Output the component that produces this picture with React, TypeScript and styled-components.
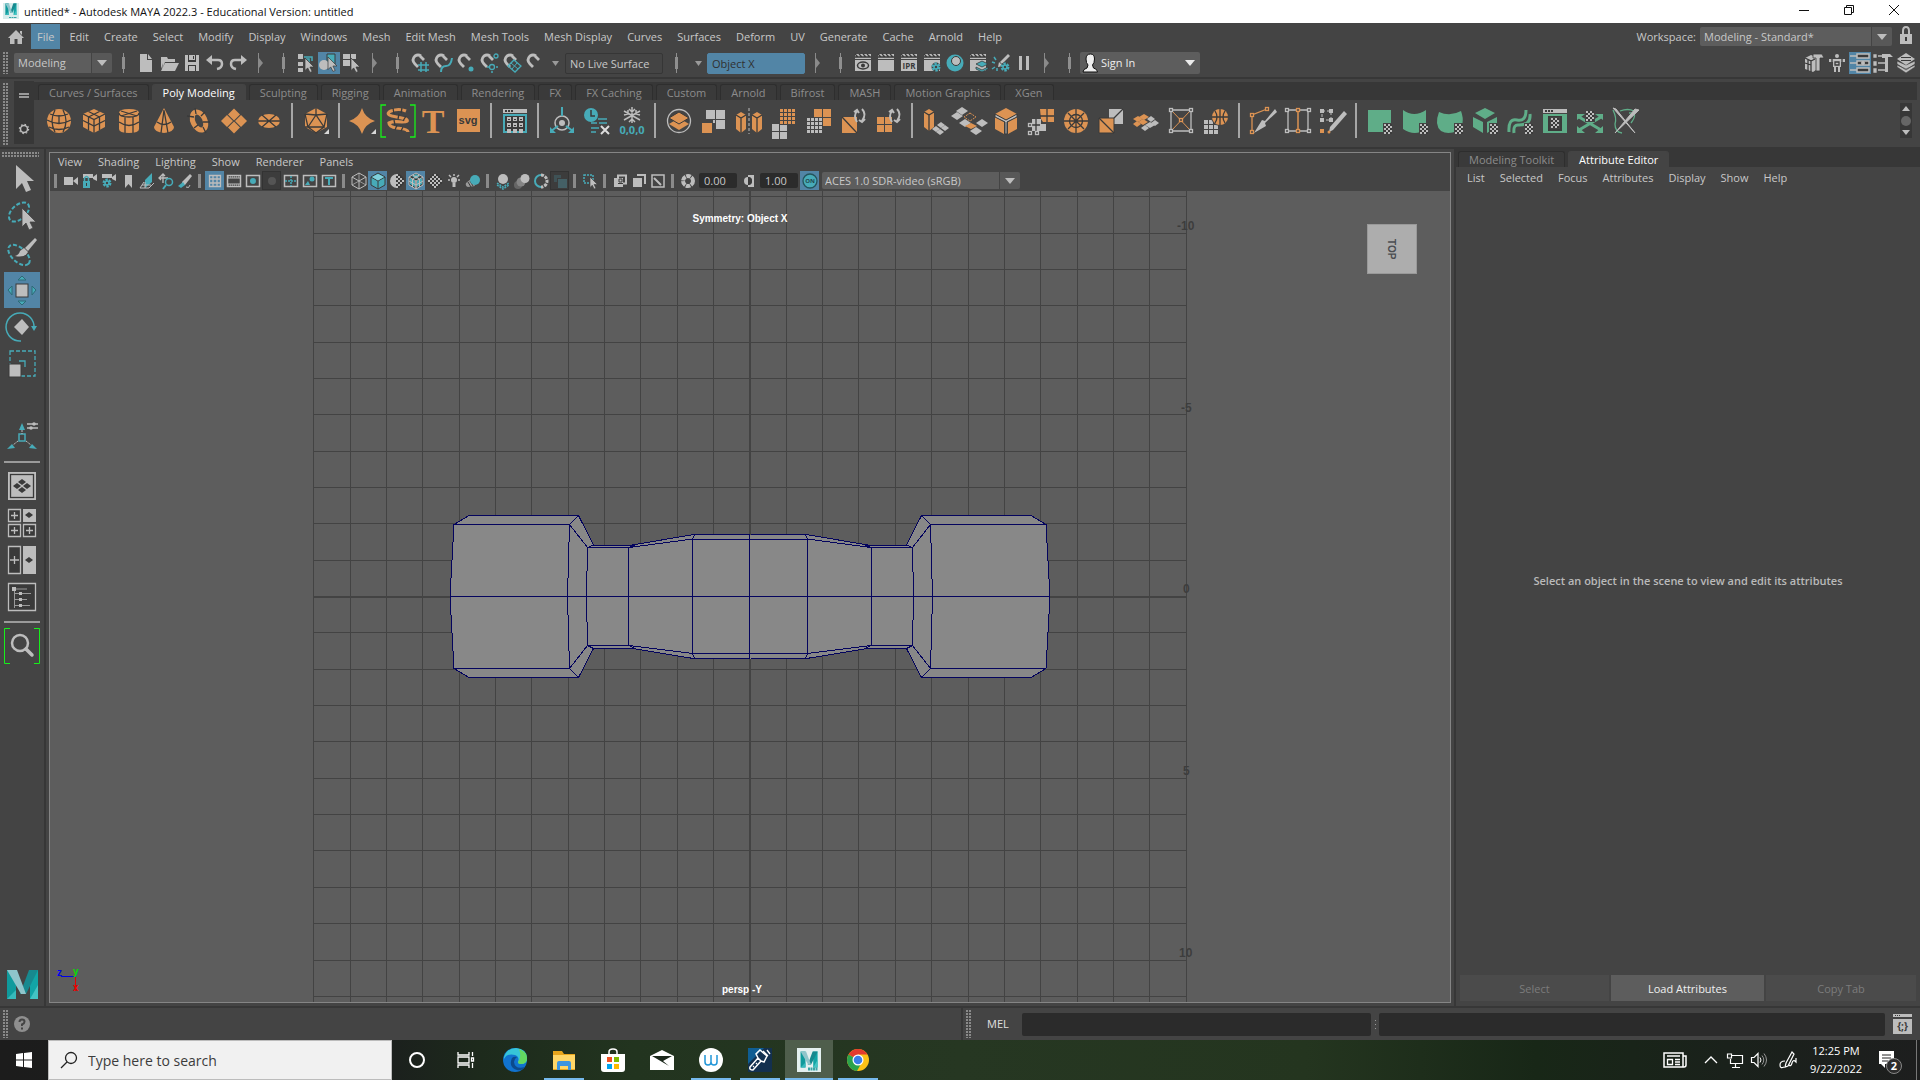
import React from "react";
import styled, { createGlobalStyle, css } from "styled-components";

const C = {
  bg: "#444444",
  dark: "#373737",
  well: "#2b2b2b",
  raised: "#5d5d5d",
  accent: "#5285a6",
  text: "#c8c8c8",
  dim: "#8c8c8c",
  light: "#bdbdbd",
  teal: "#47abb8",
  orange: "#dc9353",
  green: "#5fad88",
  ink: "#3a3a3a",
  lime: "#17f01a",
};
const { light: L, teal: T, orange: O, green: G, ink: K } = C;

const Global = createGlobalStyle`
  * { box-sizing: border-box; }
  body { margin: 0; background: ${C.bg}; }
  button, input, select { font: inherit; color: inherit; margin: 0; }
`;

const sans = `"Open Sans", "Noto Sans", sans-serif`;

const Shell = styled.div`
  display: flex;
  flex-direction: column;
  height: 100vh;
  background: ${C.bg};
  color: ${C.text};
  font: 11px/16px ${sans};
  white-space: nowrap;
  overflow: hidden;
`;

const Svg = styled.svg<{ $w?: number; $h?: number }>`
  display: block;
  flex: none;
  width: ${(p) => p.$w ?? 20}px;
  height: ${(p) => p.$h ?? p.$w ?? 20}px;
  overflow: visible;
`;

const bare = css`
  border: 0;
  padding: 0;
  background: none;
  color: inherit;
  display: flex;
  align-items: center;
  justify-content: center;
  flex: none;
`;

const Spacer = styled.div`
  flex: 1;
`;

const Grip = styled.div<{ $wide?: boolean }>`
  flex: none;
  width: ${(p) => (p.$wide ? "37px" : "5px")};
  height: ${(p) => (p.$wide ? "5px" : "auto")};
  margin: ${(p) => (p.$wide ? "0 2px" : "2px 6px 2px 3px")};
  align-self: stretch;
  background-image: radial-gradient(circle at 1px 1px, #8a8a8a 1px, transparent 1px);
  background-size: 3px 3px;
`;

/* ---------- title bar ---------- */
const TitleBar = styled.header`
  display: flex;
  align-items: center;
  flex: none;
  height: 23px;
  padding: 0 4px 3px 3px;
  background: #fff;
  color: #111;
`;
const TitleText = styled.h1`
  margin: 0 0 0 5px;
  font: inherit;
  padding-top: 3px;
`;
const WinButton = styled.button`
  ${bare}
  width: 45px;
  height: 20px;
  color: #111;
`;

/* ---------- menus ---------- */
const MenuBar = styled.nav`
  display: flex;
  flex: none;
  height: 27px;
  padding: 1px 0;
  align-items: stretch;
`;
const HomeButton = styled.button`
  ${bare}
  width: 31px;
`;
const MenuItem = styled.button<{ $on?: boolean }>`
  ${bare}
  padding: ${(p) => (p.$on ? "0 6px" : "0 7px 0 8px")};
  ${(p) => p.$on && `background: ${C.accent}; margin-right: 1px;`}
`;
const WorkspaceLabel = styled.label`
  display: flex;
  align-items: center;
  gap: 4px;
`;

const PickWrap = styled.span<{ $w: number; $h: number; $cut?: boolean }>`
  position: relative;
  display: flex;
  align-items: center;
  flex: none;
  width: ${(p) => p.$w}px;
  height: ${(p) => p.$h}px;
  background: ${(p) =>
    p.$cut === false
      ? C.raised
      : `linear-gradient(90deg, ${C.raised} calc(100% - 21px), ${C.bg} calc(100% - 21px), ${C.bg} calc(100% - 20px), #585858 calc(100% - 20px))`};
  border-radius: 2px;
`;
const PickSelect = styled.select<{ $pad?: number }>`
  appearance: none;
  border: 0;
  background: none;
  width: 100%;
  height: 100%;
  padding: 0 20px 0 ${(p) => p.$pad ?? 4}px;
  outline: 0;
`;
const PickArrow = styled.span<{ $c?: string }>`
  position: absolute;
  right: 5px;
  width: 0;
  height: 0;
  border: 5px solid transparent;
  border-top: 6px solid ${(p) => p.$c ?? L};
  border-bottom: 0;
  pointer-events: none;
`;

function Pick(p: { id: string; value: string; w: number; h: number; label?: string; cut?: boolean; pad?: number; arrow?: string }) {
  return (
    <PickWrap $w={p.w} $h={p.h} $cut={p.cut}>
      <PickSelect id={p.id} aria-label={p.label} $pad={p.pad}>
        <option>{p.value}</option>
      </PickSelect>
      <PickArrow $c={p.arrow} />
    </PickWrap>
  );
}

/* ---------- status line ---------- */
const StatusLine = styled.div`
  display: flex;
  align-items: center;
  flex: none;
  height: 27px;
  padding: 0 3px 1px 0;
`;
const Tool = styled.button<{ $on?: boolean; $w?: number }>`
  ${bare}
  width: ${(p) => p.$w ?? 23}px;
  height: 22px;
  ${(p) => p.$on && `background: linear-gradient(${C.accent}, ${C.accent}) center / 22px 100% no-repeat;`}
`;
const SepCell = styled.span<{ $w?: number }>`
  display: flex;
  justify-content: center;
  flex: none;
  width: ${(p) => p.$w ?? 22}px;
`;
const Bar = ({ w }: { w?: number }) => (
  <SepCell $w={w}>
    <Svg $w={5} $h={20} viewBox="0 0 5 20">
      <path d="M2 0h1v20H2zM1 4h3v12H1z" fill="#8f8f8f" />
    </Svg>
  </SepCell>
);
const Fold = ({ w }: { w?: number }) => (
  <SepCell $w={w}>
    <Svg $w={5} $h={20} viewBox="0 0 5 20">
      <path d="M0 0h1v20H0zM1 5l4 5-4 5z" fill="#8a8a8a" />
    </Svg>
  </SepCell>
);
const Down = ({ w }: { w: number }) => (
  <Tool $w={w} aria-label="More options">
    <Svg $w={7} $h={5} viewBox="0 0 7 5">
      <path d="M0 0h7L3.500 5z" fill="#9a9a9a" />
    </Svg>
  </Tool>
);
const Field = styled.input<{ $w: number; $tone?: string }>`
  flex: none;
  width: ${(p) => p.$w}px;
  height: 21px;
  padding: 0 4px;
  border-radius: 2px;
  border: 1px solid ${(p) => (p.$tone ? p.$tone : "#363636")};
  background: ${(p) => p.$tone ?? C.bg};
  color: ${(p) => (p.$tone ? "#303030" : C.text)};
  outline: 0;
`;
const SignIn = styled.div`
  display: flex;
  align-items: center;
  position: relative;
  color: #eee;
`;
const SignInFace = styled.span`
  position: absolute;
  left: 3px;
  z-index: 1;
  pointer-events: none;
`;

const Rule = styled.div`
  flex: none;
  height: 2px;
  background: ${C.dark};
`;

/* ---------- shelf ---------- */
const Shelf = styled.section`
  display: flex;
  flex: none;
  height: 68px;
  padding: 2px 3px 0 0;
`;
const ShelfSide = styled.div`
  display: flex;
  flex-direction: column;
  align-items: center;
  justify-content: space-between;
  flex: none;
  width: 20px;
  height: 63px;
  padding: 12px 0 10px;
  background: ${C.dark};
`;
const ShelfMain = styled.div`
  flex: 1;
  display: flex;
  flex-direction: column;
  padding-top: 1px;
`;
const TabRow = styled.div<{ $inset?: number }>`
  display: flex;
  align-items: flex-end;
  gap: 3px;
  flex: none;
  height: 18px;
  padding-left: ${(p) => p.$inset ?? 2}px;
  background: ${C.dark};
`;
const Tab = styled.button<{ $on?: boolean }>`
  ${bare}
  height: 16px;
  padding: 0 10px;
  border-radius: 3px 3px 0 0;
  border: 1px solid ${(p) => (p.$on ? C.bg : "#2e2e2e")};
  border-bottom: 0;
  background: ${(p) => (p.$on ? C.bg : "#3a3a3a")};
  color: ${(p) => (p.$on ? "#ffffff" : C.dim)};
`;
const ShelfRow = styled.div`
  display: flex;
  align-items: center;
  flex: 1;
  padding: 0 5px 6px 7px;
`;
const ShelfButton = styled.button`
  ${bare}
  width: 35px;
  height: 35px;
`;
const ShelfSep = styled.span`
  flex: none;
  width: 2px;
  height: 35px;
  margin: 0 5px;
  background: #a6a6a6;
`;
const Scroller = styled.div`
  display: flex;
  flex-direction: column;
  align-items: center;
  justify-content: space-between;
  width: 12px;
  height: 35px;
  padding: 3px 0;
  background: ${C.dark};
`;

/* ---------- workspace ---------- */
const Work = styled.main`
  display: flex;
  flex: 1;
  min-height: 0;
`;
const ToolBox = styled.aside`
  display: flex;
  flex-direction: column;
  align-items: center;
  flex: none;
  width: 44px;
  padding: 3px 0 6px;
`;
const ToolCell = styled.button<{ $on?: boolean; $first?: boolean }>`
  ${bare}
  width: 36px;
  height: 36px;
  margin-bottom: 1px;
  ${(p) => p.$first && "margin-top: 4px;"}
  ${(p) => p.$on && `background: ${C.accent};`}
`;
const ToolGap = styled.div`
  flex: none;
  height: 36px;
`;
const ToolSep = styled.hr`
  flex: none;
  width: 36px;
  height: 2px;
  margin: 5px 0;
  border: 0;
  background: #9a9a9a;
`;
const VRule = styled.div`
  flex: none;
  width: 2px;
  background: ${C.dark};
`;
const Viewport = styled.section`
  flex: 1;
  display: flex;
  flex-direction: column;
  min-width: 0;
  margin: 3px;
  border: 1px solid #858585;
`;
const PanelMenu = styled.nav<{ $roomy?: boolean }>`
  display: flex;
  align-items: center;
  flex: none;
  gap: ${(p) => (p.$roomy ? 15 : 16)}px;
  height: ${(p) => (p.$roomy ? 22 : 18)}px;
  padding-left: ${(p) => (p.$roomy ? 11 : 8)}px;
`;
const PlainMenu = styled.button`
  ${bare}
`;
const PanelTools = styled.div`
  display: flex;
  align-items: center;
  flex: none;
  height: 20px;
  padding-bottom: 1px;
`;
const MiniTool = styled.button<{ $on?: boolean; $box?: boolean }>`
  ${bare}
  width: 19px;
  height: 19px;
  ${(p) => p.$on && `background: ${C.accent};`}
  ${(p) => p.$box && `background: #3c3c3c; border: 1px solid #333;`}
`;
const MiniSep = styled.span`
  flex: none;
  width: 3px;
  height: 14px;
  margin: 0 4px;
  background: #8a8a8a;
`;
const NumField = styled.input`
  flex: none;
  width: 38px;
  height: 15px;
  margin: 0 2px;
  padding: 0 5px;
  border: 0;
  border-radius: 2px;
  background: ${C.well};
`;
const Canvas = styled.div`
  position: relative;
  flex: 1;
  min-height: 0;
  overflow: hidden;
  background: ${C.raised};
  font: bold 10px/12px "Liberation Sans", Arial, sans-serif;
`;
const Scene = styled.svg`
  position: absolute;
  inset: 0;
  width: 100%;
  height: 100%;
`;
const Caption = styled.span<{ $bottom?: boolean }>`
  position: absolute;
  left: 0;
  right: ${(p) => (p.$bottom ? 16 : 20)}px;
  ${(p) => (p.$bottom ? "bottom: 6px;" : "top: 22px;")}
  text-align: center;
  color: #fff;
`;
const ViewCube = styled.button`
  position: absolute;
  top: 33px;
  right: 33px;
  width: 50px;
  height: 50px;
  padding: 0 2px 0 0;
  border: 1px solid #999;
  background: #adadad;
  color: #4b4e52;
  font-weight: bold;
  writing-mode: vertical-rl;
`;
const Gizmo = styled.svg`
  position: absolute;
  left: 6px;
  bottom: 6px;
  width: 24px;
  height: 30px;
`;

/* ---------- attribute editor ---------- */
const Attributes = styled.aside`
  display: flex;
  flex-direction: column;
  flex: none;
  width: 464px;
`;
const Message = styled.p`
  flex: 1;
  display: flex;
  align-items: center;
  justify-content: center;
  margin: 0;
  padding-bottom: 3px;
  font-weight: 600;
  color: #bababa;
`;
const ButtonRow = styled.div`
  display: grid;
  grid-template-columns: 149fr 153fr 150fr;
  gap: 2px;
  padding: 0 4px 5px;
`;
const WideButton = styled.button`
  height: 26px;
  padding: 1px 0 0;
  border: 0;
  background: ${C.raised};
  color: #f0f0f0;
  &:disabled {
    background: #4b4b4b;
    color: #7c7c7c;
  }
`;

/* ---------- command line ---------- */
const CommandRow = styled.div`
  display: flex;
  flex: none;
  height: 32px;
`;
const HelpLine = styled.div`
  display: flex;
  align-items: center;
  flex: 961 1 0;
`;
const CommandLine = styled.div`
  display: flex;
  align-items: center;
  flex: 957 1 0;
`;
const MelLabel = styled.label`
  margin: 0 13px 0 10px;
  color: #e0e0e0;
`;
const Entry = styled.input<{ $grow: number }>`
  flex: ${(p) => p.$grow} 1 0;
  min-width: 0;
  height: 23px;
  border: 0;
  border-radius: 2px;
  background: ${C.well};
  outline: 0;
`;
const EntryGrip = styled.span`
  flex: none;
  width: 1px;
  height: 9px;
  margin: 0 3px 0 4px;
  background: repeating-linear-gradient(#999 0 1px, transparent 1px 4px);
`;
const ScriptButton = styled.button`
  ${bare}
  width: 35px;
`;

/* ---------- windows taskbar ---------- */
const Taskbar = styled.footer`
  display: flex;
  align-items: stretch;
  flex: none;
  height: 40px;
  background: linear-gradient(90deg, #1c1c1c 0, #1b1f1d 20%, #1d2a1c 25%, #22341f 33%, #263722 50%, #24351f 68%, #182717 80%, #1a211b 90%, #1d1e1e 100%);
  color: #fff;
`;
const StartButton = styled.button`
  ${bare}
  width: 48px;
`;
const SearchBox = styled.label`
  display: flex;
  align-items: center;
  flex: none;
  width: 344px;
  padding-left: 12px;
  gap: 11px;
  background: #f1f1f1;
  border: 1px solid #bcbcbc;
`;
const SearchInput = styled.input`
  flex: 1;
  min-width: 0;
  border: 0;
  padding: 1px 0 0;
  background: none;
  outline: 0;
  font-size: 14px;
  line-height: 20px;
  &::placeholder {
    color: #3c3c3c;
    opacity: 1;
  }
`;
const TaskButton = styled.button<{ $open?: boolean; $active?: boolean }>`
  ${bare}
  width: 49px;
  background:
    ${(p) =>
      p.$active
        ? "linear-gradient(#76b9ed, #76b9ed) center bottom / 48px 2px no-repeat, linear-gradient(#4f5e4c, #4f5e4c) center / 48px 100% no-repeat"
        : p.$open
          ? "linear-gradient(#76b9ed, #76b9ed) center bottom / 40px 2px no-repeat"
          : "none"};
`;
const TrayButton = styled.button<{ $w: number }>`
  ${bare}
  width: ${(p) => p.$w}px;
`;
const Clock = styled.time`
  display: flex;
  flex-direction: column;
  justify-content: center;
  gap: 2px;
  width: 64px;
  text-align: center;
`;
const Desk = styled.span`
  width: 1px;
  margin: 0 3px 0 7px;
  background: #777;
`;

/* ---------- drawings ---------- */
const k = { stroke: K, strokeWidth: 1.3, fill: "none" };

const Checker = ({ x, y, s = 2 }: { x: number; y: number; s?: number }) => (
  <g>
    <rect x={x - 1} y={y - 1} width={s * 4 + 2} height={s * 5 + 2} fill={C.bg} />
    {Array.from({ length: 20 }, (_, i) => {
      const cx = i % 4;
      const cy = Math.floor(i / 4);
      return <rect key={i} x={x + cx * s} y={y + cy * s} width={s} height={s} fill={(cx + cy) % 2 ? K : L} />;
    })}
  </g>
);

/* a ball covered with two-pixel checks */
const CheckBall = ({ from = 0 }: { from?: number }) => (
  <g>
    {Array.from({ length: 49 }, (_, i) => {
      const cx = i % 7;
      const cy = Math.floor(i / 7);
      const inside = Math.hypot(cx - 3, cy - 3) < 3.5 && cx >= from;
      return inside ? <rect key={i} x={1 + cx * 2} y={1 + cy * 2} width="2" height="2" fill={(cx + cy) % 2 ? L : K} /> : null;
    })}
  </g>
);

const Squares = ({ x, y, n, s, g, c }: { x: number; y: number; n: number; s: number; g: number; c: string }) => (
  <g fill={c}>
    {Array.from({ length: n * n }, (_, i) => (
      <rect key={i} x={x + (i % n) * (s + g)} y={y + Math.floor(i / n) * (s + g)} width={s} height={s} />
    ))}
  </g>
);

const CubeLines = ({ fill }: { fill: string }) => (
  <>
    <path d="M13 1 24 6v13L13 25 2 19V6z" fill={fill} />
    <path d="M2 6l11 5.500L24 6M13 11.500V25" {...k} />
  </>
);

const Spin = () => <path d="M16 3q-4 5 0 11m-3-10 3-2 2 3M21 1q5 5 0 12m-3-1 3 2 3-3" stroke={L} strokeWidth="2" fill="none" />;
const Corner = () => <path d="M26 21v5h-5z" fill="#d8d8d8" />;
const node = (x: number, y: number, c = L) => <rect key={`${x},${y}`} x={x - 1.5} y={y - 1.5} width="3" height="3" fill={C.bg} stroke={c} strokeWidth="1.300" />;
const Diamond = ({ x, y, c, w = 6, h = 4 }: { x: number; y: number; c: string; w?: number; h?: number }) => (
  <path d={`M${x} ${y - h}l${w} ${h}-${w} ${h}-${w}-${h}z`} fill={c} />
);

const shelf: (null | [string, React.ReactNode])[] = [
  ["Sphere", <><circle cx="13" cy="13" r="12" fill={O} /><path d="M1 12q12 7 24 0M3 19q10 5 20 0M4 6q9 4 18 0M9 2Q3 13 9 24M17 2q6 11 0 22M13 7v9" {...k} /></>],
  ["Cube", <><CubeLines fill={O} /><path d="M2 12.500 13 18l11-5.500M7.500 8.500V22M18.500 8.500V22M7.500 3.500l11 5.500M18.500 3.500l-11 5.500" {...k} /></>],
  ["Cylinder", <><path d="M3 5q0-4 10-4t10 4v16q0 4-10 4T3 21z" fill={O} /><path d="M3 5q0 4 10 4t10-4M3 14q10 7 20 0M9 9v16M17 9v16M5 3l16 5M21 3 5 8" {...k} /></>],
  ["Cone", <><path d="M13 0 23 19q0 5-10 6-10-1-10-6z" fill={O} /><path d="M13 2 10 25M13 2l4 23M6 14q7 5 14 0" {...k} /></>],
  ["Torus", <><ellipse cx="13" cy="13" rx="6" ry="9.500" transform="rotate(-25 13 13)" fill="none" stroke={O} strokeWidth="5" /><path d="M1 8l7 1M9 0l1 6M19 4l-4 4M24 14l-7 0M20 25l-3-6M8 20l4-3" {...k} /></>],
  ["Plane", <><Diamond x={13} y={6.5} c={O} h={6} /><Diamond x={6} y={13} c={O} h={6} /><Diamond x={20} y={13} c={O} h={6} /><Diamond x={13} y={19.5} c={O} h={6} /></>],
  ["Disc", <><ellipse cx="13" cy="13" rx="11" ry="7" fill={O} /><path d="M2 13h22M6 7l14 12M20 7 6 19" {...k} /></>],
  null,
  ["Platonic solid", <><path d="M13 0l11 6v13l-11 6-11-6V6z" fill={O} /><path d="M13 0v7M13 7 5 19h16zM13 7 2 6M13 7l11-1M2 6l3 13-3 0M24 6l-3 13M5 19l8 6 8-6" {...k} /><Corner /></>],
  null,
  ["Super shape", <><path d="M12 0q3 10 13 13-10 3-13 13Q9 16-1 13 9 10 12 0z" fill={O} /><Corner /></>],
  ["Helix", <><path d="M1-3h-5v32h5M25-3h5v32h-5" stroke={C.lime} fill="none" strokeWidth="1.300" /><path d="M21 3Q14 0 6 3q-6 3 1 5 10 2 14 3 4 3-4 3-9-1-13 1 0 4 8 5 11 1 11 4" stroke={O} strokeWidth="3.200" fill="none" /><path d="M8 0l1 6M14 6l-1 5M21 8l-3 5M9 12l1 5M12 17l-2 5M17 0l-1 5M18 19l-2 4" {...k} /></>],
  ["Type", <text x="13" y="25" textAnchor="middle" fill={O} fontFamily="Liberation Serif, serif" fontWeight="bold" fontSize="34">T</text>],
  ["SVG", <><rect x="2" y="1" width="23" height="23" fill={O} /><text x="13" y="16" textAnchor="middle" fill={K} fontFamily="Liberation Sans, sans-serif" fontWeight="bold" fontSize="11">svg</text></>],
  null,
  ["Content browser", <><path d="M1 1h24v4H1z" fill={L} /><path d="M3 2h2v2H3zM6 2h2v2H6zM9 2h2v2H9z" fill={K} /><path d="M1 6h24v19H1z" fill={T} /><rect x="3" y="8" width="20" height="15" fill={K} /><Squares x={5} y={9} n={3} s={4} g={2} c={L} /><path d="M6 11h2v1H6zM12 11h2v1h-2zM18 11h2v1h-2zM6 17h2v1H6zM12 17h2v1h-2zM18 17h2v1h-2z" fill={K} /></>],
  null,
  ["Center pivot", <><circle cx="13" cy="15" r="7" fill="none" stroke={L} strokeWidth="1.500" /><circle cx="13" cy="15" r="3" fill={L} /><path d="M13-1v9M9 18l-7 5M17 18l7 5" stroke={T} strokeWidth="2" /><path d="M1 19v6h6zM25 19v6h-6z" fill={T} /></>],
  ["Delete history", <><circle cx="7" cy="7" r="7" fill={T} /><path d="M7 2v6h4" stroke={K} fill="none" strokeWidth="1.500" /><path d="M14 11h9M7 15h6M15 15h8M7 20h8M7 24h5" stroke={T} strokeWidth="1.500" /><path d="M17 18l8 8M25 18l-8 8" stroke="#ddd" strokeWidth="2" /></>],
  ["Freeze transforms", <><path d="M13-1v16M5 3l16 9M21 3 5 12M10 1l3 3 3-3M10 14l3-3 3 3M5 7l4-1V2M21 7l-4-1V2" stroke={L} strokeWidth="1.500" fill="none" /><text x="13" y="26" textAnchor="middle" fill={T} fontFamily="Open Sans, sans-serif" fontWeight="bold" fontSize="11">0,0,0</text></>],
  null,
  ["Combine", <><circle cx="13" cy="13" r="11.500" fill="none" stroke={L} strokeWidth="1.300" /><Diamond x={13} y={16} c={O} w={10} h={6} /><path d="M3 10l10-6 10 6-10 6z" fill={O} stroke={K} /></>],
  ["Separate", <><path d="M5 2h9v9H5zM15 2h9v9h-9zM15 12h9v9h-9zM12 12h2v3h-2z" fill={L} /><rect x="1" y="15" width="10" height="10" fill={O} /></>],
  ["Mirror", <><path d="M0 7l5-3 5 3v14l-5 4-5-4zM16 7l5-3 5 3v14l-5 4-5-4z" fill={O} /><path d="M0 7l5 3 5-3M5 10v15M16 7l5 3 5-3M21 10v15" {...k} /><path d="M13 0v26" stroke={L} strokeDasharray="3 2" /></>],
  ["Smooth", <><Squares x={1} y={16} n={2} s={7} g={1} c={L} /><rect x="8" y="0" width="18" height="17" fill={C.bg} /><path d="M9 17h7v6H9z" fill={L} /><Squares x={9} y={1} n={4} s={3} g={1} c={O} /></>],
  ["Reduce", <><Squares x={8} y={1} n={2} s={8} g={1} c={O} /><rect x="0" y="9" width="16" height="17" fill={C.bg} /><Squares x={1} y={10} n={4} s={3} g={1} c={L} /></>],
  ["Triangulate", <><path d="M1 9h15v16H1z" fill={O} /><path d="M1 9l15 16" {...k} /><Spin /></>],
  ["Quadrangulate", <><Squares x={1} y={9} n={2} s={7} g={1} c={O} /><Spin /></>],
  null,
  ["Extrude", <><path d="M1 4l5-3 5 3v15l-5 4-5-4z" fill={O} /><path d="M1 4l5 3 5-3M6 7v16" {...k} /><Diamond x={18} y={17} c={L} w={4} h={3} /><Diamond x={13} y={21} c={L} w={4} h={3} /><Diamond x={22} y={20} c={L} w={4} h={3} /><Diamond x={17} y={24} c={L} w={4} h={3} /></>],
  ["Bridge", <><Diamond x={4} y={3} c={L} /><Diamond x={-1} y={8} c={L} /><Diamond x={24} y={15} c={L} /><Diamond x={7} y={15} c={L} /><Diamond x={18} y={23} c={L} /><Diamond x={13} y={18} c={O} h={3} /><path d="M12 5l6 4-6 4-6-4z" stroke={O} fill="none" strokeDasharray="2 1" /></>],
  ["Bevel", <><path d="M13 0l11 6-11 6L2 6z" fill={O} /><path d="M2 9l9 5v12l-9-5zM24 9l-9 5v12l9-5z" fill={O} /><path d="M2 6l11 6 11-6v3l-10 5v12h-2V14L2 9z" fill={L} stroke={K} /></>],
  ["Collapse", <><path d="M12 1h14v13H15l-2-3z" fill={O} /><path d="M19 1v13M12 8h14" {...k} /><path d="M4 11h9v12H4z" fill={L} /><path d="M8 11v12M4 17h13" {...k} /><path d="M12 16h6v7h-6z" fill={L} />{node(2, 17)}{node(2, 25)}{node(9, 25)}</>],
  ["Circularize", <><circle cx="13" cy="13" r="12" fill={O} /><circle cx="13" cy="13" r="6.500" {...k} /><path d="M13 1v24M1 13h24M5 5l16 16M21 5 5 21" {...k} /></>],
  ["Merge", <><path d="M11 1h14v15H11z" fill={L} /><path d="M1 10h15v15H1z" fill={O} stroke={K} /><path d="M25 1 16 10M1 10l15 15" {...k} /></>],
  ["Merge to center", <><Diamond x={5} y={11} c={O} w={5} h={3} /><Diamond x={11} y={9} c={O} w={5} h={3} /><Diamond x={4} y={16} c={O} w={4} h={3} /><Diamond x={10} y={14} c={O} w={5} h={3} /><Diamond x={18} y={11} c={L} w={4} h={3} /><Diamond x={22} y={15} c={L} w={4} h={3} /><Diamond x={17} y={17} c={L} w={5} h={3} /><Diamond x={12} y={20} c={L} w={4} h={3} /></>],
  ["Target weld", <><path d="M3 2h20v21H3z" stroke={L} fill="none" strokeWidth="1.300" /><path d="M4 3l18 19M22 3 4 22" stroke={O} />{node(3, 2)}{node(23, 2)}{node(3, 23)}{node(23, 23)}{node(13, 12, O)}</>],
  ["Transfer", <><Squares x={1} y={12} n={3} s={4} g={1} c={L} /><circle cx="17" cy="9" r="9" fill={C.bg} /><circle cx="17" cy="9" r="8" fill={O} /><path d="M17 1v16M9 9h16M12 3q4 6 0 12M22 3q-4 6 0 12" {...k} /></>],
  null,
  ["Multi-cut", <><path d="M2 24V7L17 1" stroke={O} fill="none" strokeWidth="1.300" /><path d="M25 1 15 13l-3-1-8 13 12-7-1-3L27 4z" fill={L} />{node(2, 7, O)}{node(17, 1, O)}{node(2, 24, O)}</>],
  ["Insert edge loop", <><path d="M3 2h20M3 23h20M3 2v21M23 2v21" stroke={L} strokeWidth="1.300" /><path d="M13 2v21" stroke={O} strokeWidth="1.500" />{node(2, 2)}{node(24, 2)}{node(2, 23)}{node(24, 23)}{node(13, 2, O)}{node(13, 23, O)}</>],
  ["Quad draw", <><path d="M2 3h9v9H2z" stroke={L} fill="none" strokeDasharray="3 2" /><path d="M0 1h4v4H0zM9 1h4v4H9zM0 10h4v4H0zM9 10h4v4H9z" fill={L} /><path d="M0 21h4v4H0z" fill={O} /><path d="M24 3l3 3-14 16-4 2 1-5z" fill={L} /><circle cx="9" cy="24" r="1.500" fill={O} /></>],
  null,
  ["Planar map", <><rect x="1" y="2" width="23" height="22" fill={G} /><Checker x={17} y={16} /></>],
  ["Cylindrical map", <><path d="M1 2q11 8 23 0v19q-11 8-23 0z" fill={G} /><Checker x={18} y={16} /></>],
  ["Spherical map", <><path d="M2 4q11 5 22-1 5 14-4 20-9 4-16 0-7-6-2-19z" fill={G} /><Checker x={18} y={16} /></>],
  ["Automatic map", <><path d="M13 0l10 5-10 6L3 5zM1 9l10 5v11L1 19zM25 9l-10 5v11l10-6z" fill={G} /><Checker x={18} y={16} /></>],
  ["Contour stretch", <><path d="M2 24q-1-14 8-12 9 2 9-10M7 25q-1-9 5-8 12 0 11-11" stroke={G} strokeWidth="3" fill="none" /><Checker x={18} y={16} /></>],
  ["UV editor", <><path d="M1 1h24v4H1z" fill={L} /><path d="M3 2h2v2H3zM6 2h2v2H6zM9 2h2v2H9z" fill={K} /><path d="M1 6h24v19H1z" fill={G} /><rect x="6" y="8" width="14" height="15" fill={K} /><Checker x={9} y={10} /></>],
  ["Unfold", <><path d="M2 9l22 13M24 9 2 22" stroke={G} strokeWidth="3" /><path d="M0 6h8l-8 6zM26 6h-8l8 6zM0 25v-7l8 7zM26 25v-7l-8 7z" fill={G} /><Checker x={9} y={3} /></>],
  ["Cut and sew", <><path d="M1 2q4 8 2 14 0 8 7 9M8 3q8-3 14 0M17 5q10-1 2 10" stroke={G} fill="none" strokeWidth="1.300" /><path d="M1 0l3 1 19 24zM23 1l4 1L3 25z" fill={L} stroke={L} /></>],
];

const Magnet = () => <path d="M11 3Q8 1 5 3 1 7 5 11l3 3M10 3l4 4" stroke={L} strokeWidth="2.800" fill="none" />;
const Pointer = ({ x = 0, y = 0, s = 1 }: { x?: number; y?: number; s?: number }) => (
  <path d="M0 0v14l3-3 2.500 5 2.500-1-2.500-5H10z" transform={`translate(${x} ${y}) scale(${s})`} fill={L} stroke={K} strokeWidth="0.800" />
);
const Clap = () => (
  <>
    <path d="M2 1h16v5H2z" fill={L} />
    <path d="M2 1l3 3M6 1l3 3M10 1l3 3M14 1l3 3M2 4h16" stroke={K} strokeWidth="1.300" />
    <path d="M2 7h16v11H2z" fill={L} />
  </>
);
const Gear = ({ x, y, r = 4 }: { x: number; y: number; r?: number }) => (
  <g>
    <circle cx={x} cy={y} r={r + 1.5} fill={C.bg} />
    <circle cx={x} cy={y} r={r} fill="none" stroke={T} strokeWidth="3" strokeDasharray="2.100 1" />
    <circle cx={x} cy={y} r={r - 1} fill="none" stroke={T} strokeWidth="1.500" />
  </g>
);

const fileTools: [string, React.ReactNode][] = [
  ["New scene", <path d="M4 1h7v6h5v12H4zM12 1l4 5h-4z" fill={L} />],
  ["Open scene", <path d="M2 4h6l1 2h7v3H6l-3 7 1-6-2 6zM6 10h14l-4 8H2z" fill={L} />],
  ["Save scene", <><path d="M3 2h14v16H3z" fill={L} /><path d="M6 2h8v7H6zM6 12h8v6H6z" fill={K} /><path d="M7 2h6v5H7zM7 13h6v5H7z" fill={L} /><path d="M11 3h1v3h-1z" fill={K} /></>],
  ["Undo", <><path d="M5 7h8q4 0 4 4t-5 5" stroke={L} strokeWidth="2.500" fill="none" /><path d="M1 7l6-5v10z" fill={L} /></>],
  ["Redo", <><path d="M15 7H7q-4 0-4 4t5 5" stroke={L} strokeWidth="2.500" fill="none" /><path d="M19 7l-6-5v10z" fill={L} /></>],
];
const selectTools: [string, React.ReactNode, boolean?][] = [
  ["Select by hierarchy", <><path d="M2 1h5v5H2zM2 9h5v4H2zM2 15h5v4H2z" fill={L} /><path d="M8 4h8v4M10 6h3v4" stroke={T} strokeWidth="1.500" fill="none" /><Pointer x={9} y={5} s={0.9} /></>],
  ["Select by object", <><path d="M8 1h8v10H8z" fill={T} stroke={K} /><circle cx="5" cy="12" r="5" fill={L} /><Pointer x={9} y={4} s={0.9} /></>, true],
  ["Select by component", <><path d="M1 1h7v5H1zM9 1h5v5H9zM1 7h7v6H1zM9 7h3v6H9z" fill={L} /><Pointer x={9} y={5} s={0.9} /></>],
];
const snapTools: [string, React.ReactNode][] = [
  ["Snap to grids", <><Magnet /><path d="M11 9v10M16 9v10M8 12h11M8 17h11" stroke={T} strokeWidth="1.500" /></>],
  ["Snap to curves", <><Magnet /><path d="M8 19q0-6 5-6t6-8" stroke={T} strokeWidth="2" fill="none" /></>],
  ["Snap to points", <><Magnet /><circle cx="15" cy="16" r="2.500" fill={T} /></>],
  ["Snap to projected center", <><Magnet /><circle cx="17" cy="3" r="2" fill="none" stroke={T} strokeWidth="1.300" /><circle cx="13" cy="14" r="2.500" fill="none" stroke={T} strokeWidth="1.300" /><path d="M13 18v2M17 14h2M8 14h2" stroke={T} strokeWidth="1.500" /></>],
  ["Snap to view planes", <><Magnet /><path d="M12 7l7 6-6 6-7-6z" fill="none" stroke={T} strokeWidth="1.300" /><path d="M9 10l7 6M15 10l-5 6" stroke={T} /></>],
  ["Make live", <Magnet />],
];
const renderTools: [string, React.ReactNode][] = [
  ["Render view", <><Clap /><ellipse cx="10" cy="12.500" rx="5.500" ry="3.500" fill={L} stroke={K} strokeWidth="1.500" /><circle cx="10" cy="12.500" r="2" fill={K} /></>],
  ["Render frame", <Clap />],
  ["IPR render", <><Clap /><text x="10" y="16" textAnchor="middle" fill={K} fontFamily="Open Sans, sans-serif" fontWeight="bold" fontSize="8">IPR</text></>],
  ["Render settings", <><Clap /><Gear x={14} y={14} r={3} /></>],
  ["Hypershade", <><circle cx="10" cy="10" r="8.500" fill={T} /><circle cx="11" cy="8" r="4.500" fill={L} stroke={K} /></>],
  ["Render setup", <><Clap /><path d="M14 8l6 3-6 3-6-3z" fill={T} stroke={K} strokeWidth="0.800" /><path d="M8 14l6 3 6-3v2l-6 3-6-3z" fill={T} stroke={K} strokeWidth="0.800" /></>],
  ["Light editor", <><path d="M17 1l-8 8 2 2 8-8zM8 9l4 4-5 1z" fill={L} /><path d="M1 9l3 1M3 4l2 3M1 16l3-2M6 18v-3" stroke={T} strokeWidth="1.500" /><Gear x={14} y={14} r={3} /></>],
  ["Pause viewport", <path d="M5 3h3v14H5zM12 3h3v14h-3z" fill={L} />],
];
const sideTools: [string, React.ReactNode, boolean?][] = [
  ["Modeling toolkit", <><path d="M1 5l6-3 5 2v2l3 0v9l-6 4-8-3z" fill={L} /><path d="M1 5l6 3 0 11M7 8l4-2M1 10l6 2M4 6v12" {...k} /><path d="M9 1h9l2 4h-4v13h-4V5H9z" fill={L} stroke={K} strokeWidth="0.800" /></>],
  ["Character controls", <><circle cx="10" cy="3" r="2" fill={L} /><path d="M2 6h16v3h-4v5h-1v5h-2v-5H9v5H7v-5H6V9H2z" fill={L} /><path d="M5 6v3M15 6v3M8 9h4v3H8z" {...k} /></>],
  ["Attribute editor", <><path d="M0 3h7M0 10h7M0 17h7" stroke={L} strokeWidth="1.500" /><path d="M7 1h12v4H7zM7 8h12v4H7zM7 15h12v4H7z" fill={K} stroke={L} strokeWidth="1.500" /><circle cx="13" cy="10" r="2" fill={L} /></>, true],
  ["Tool settings", <><path d="M1 2h2v2H1zM1 9h2v3H1zM1 16h2v3H1zM5 3h4M5 10h7M5 17h7" fill={L} stroke={L} strokeWidth="1.300" /><path d="M9 1h8l3 3h-5v15h-3V5H9z" fill={L} /></>],
  ["Channel box", <><path d="M10 12l9-4v3l-9 6-9-6V8zM10 16l9-4v2l-9 6-9-6v-2z" fill={L} stroke={K} strokeWidth="0.600" /><path d="M10 0l9 6-9 6-9-6z" fill={L} /><path d="M5 4.500h10M5 7.500h10" stroke={K} /></>],
];

const MiniCube = ({ fill, c = K }: { fill: string; c?: string }) => (
  <><path d="M8 0l7 4v8l-7 4-7-4V4z" fill={fill} stroke={c} /><path d="M1 4l7 4 7-4M8 8v8" stroke={c} fill="none" /></>
);
const Frame = ({ children }: { children?: React.ReactNode }) => (
  <><path d="M1.500 2.500h13v11h-13z" fill="none" stroke={L} strokeWidth="1.500" />{children}</>
);
const Camera = () => <path d="M1 4h9v8H1zM10 8l5-4v8z" fill={L} />;
type Mini = "|" | [string, React.ReactNode, ("on" | "box")?];
const mini: Mini[] = [
  "|",
  ["Select camera", <Camera />],
  ["Lock camera", <><path d="M1 1h10v4H1zM11 4l4-3v7l-4-2z" fill={L} /><path d="M1 8h7v7H1z" fill={T} /><path d="M2.500 8V5q2-3 4 0v3" stroke={T} fill="none" strokeWidth="1.500" /><path d="M4 10h1v3H4z" fill={K} /></>],
  ["Camera attributes", <><path d="M1 1h10v4H1zM11 4l4-3v7l-4-2z" fill={L} /><Gear x={6} y={10} r={3} /></>],
  ["Bookmarks", <path d="M5 2h7v13l-3.500-4L5 15z" fill={L} />],
  ["Image plane", <><path d="M6 7l7-7v9l-7 6z" fill={T} /><path d="M5 9l-4 6h9l5-5M3 12h9M6 9v6" stroke={L} fill="none" /></>],
  ["Pan and zoom", <><path d="M5 1v9M1 5h9M3 3l2-2 2 2M3 3 1 5l2 2" stroke={L} fill="none" strokeWidth="1.300" /><circle cx="11" cy="9" r="3.500" fill="none" stroke={T} strokeWidth="1.500" /><path d="M8 12l-3 4" stroke={T} strokeWidth="2" /></>],
  ["Grease pencil", <><path d="M13 1l2 2-7 9-3 0 0-3z" fill={L} /><path d="M1 13l5-4 2 3-4 3z" fill={T} /><path d="M9 14q3 2 4-2" stroke={L} fill="none" /></>],
  "|",
  ["Grid", <><path d="M2.500 2.500h11v11h-11zM6 2v12M10 2v12M2 6h12M2 10h12" stroke={L} fill="none" strokeWidth="1.300" /></>, "on"],
  ["Film gate", <Frame><path d="M1 5h14M1 11h14" stroke={L} /><path d="M2 4h12M2 12h12" stroke={L} strokeDasharray="1 1" /></Frame>],
  ["Resolution gate", <Frame><circle cx="8" cy="8" r="3" fill={T} /></Frame>],
  ["Gate mask", <circle cx="8" cy="8" r="4" fill="#555" />, "box"],
  ["Field chart", <Frame><path d="M8 3v10M2 8h12" stroke={T} strokeWidth="1.500" strokeDasharray="2 1" /></Frame>],
  ["Safe action", <Frame><circle cx="10" cy="6" r="2.500" fill={T} /><path d="M3 12l3-4 2 4z" fill={T} /></Frame>],
  ["Safe title", <Frame><path d="M4 4h8v2H9v6H7V6H4z" fill={T} /></Frame>],
  "|",
  ["Wireframe", <><MiniCube fill="none" c={L} /><path d="M8 0v8l-7 4M8 8l7 4" stroke={L} fill="none" strokeWidth="0.700" /></>],
  ["Smooth shade", <><MiniCube fill={T} /><path d="M8 1l6 3-6 3.500L2 4z" fill="#7fd0dc" /></>, "on"],
  ["Default material", <><circle cx="8" cy="8" r="7" fill={K} /><path d="M8 1a7 7 0 0 0 0 14z" fill={L} /><CheckBall from={3} /></>],
  ["Wireframe on shaded", <><MiniCube fill={K} c={L} /><path d="M2 5l5 3v6l-5-3zM14 5l-5 3v6l5-3zM8 1l4 2-4 3-4-3z" fill={T} /><path d="M4.500 6v8M11.500 6v8M1 8l7 4 7-4M4.500 2l7 4M11.500 2l-7 4M8 8v8" stroke={L} fill="none" /></>, "on"],
  ["Textured", <CheckBall />],
  ["Use all lights", <><circle cx="8" cy="7" r="3" fill={L} /><path d="M6.500 10h3v4h-3z" fill={L} /><path d="M8 1v2M2 7h2M12 7h2M3 2l2 2M13 2l-2 2" stroke={L} strokeWidth="1.500" /></>],
  ["Shadows", <><path d="M6 6l-5 4q-1 3 2 4l7-1z" fill="#9a9a9a" /><path d="M3 9l3 5M5 8l3 5" stroke={K} /><circle cx="10" cy="7" r="5" fill={T} /></>],
  "|",
  ["Ambient occlusion", <><path d="M2 10l6 4 6-4M2 12l6 4 6-4" stroke={T} fill="none" strokeDasharray="2 1" strokeWidth="1.500" /><circle cx="8" cy="6" r="5" fill={L} /></>],
  ["Motion blur", <><circle cx="4" cy="12" r="4" fill="#666" /><circle cx="7" cy="9" r="4.500" fill="#858585" /><circle cx="11" cy="5.500" r="4.500" fill={L} /></>],
  ["Anti-aliasing", <><path d="M8 2a6 6 0 0 0 0 12" stroke={T} fill="none" strokeWidth="2" /><path d="M8 2a6 6 0 0 1 0 12" stroke={L} fill="none" strokeWidth="3" strokeDasharray="3 1" /></>],
  ["Depth of field", <><path d="M2 2h7v3H5v4H2z" fill="#3f5256" /><path d="M6 6h9v9H6z" fill="#446066" /></>, "box"],
  "|",
  ["Isolate select", <><path d="M2 2h9v8H2z" stroke={T} fill="none" strokeWidth="1.500" strokeDasharray="2 1" /><Pointer x={8} y={4} s={0.75} /></>],
  "|",
  ["X-ray", <><path d="M2 5h9v9H2z" fill={L} /><path d="M6 2.500h8v8H6z" fill="none" stroke={L} strokeWidth="2" /><path d="M5 4h1v7h5v-1H6V4z" fill={K} /><path d="M7 6h3v3H7z" fill={L} stroke={K} /></>],
  ["X-ray joints", <><path d="M6 2h8v9" fill="none" stroke={L} strokeWidth="2" /><path d="M2 5h9v9H2z" fill={L} /></>],
  ["X-ray active", <><path d="M2 2h12v12H2z" fill="none" stroke={L} strokeWidth="1.500" /><path d="M4 5l7 7" stroke={L} strokeWidth="2" /></>],
  "|",
];

const toolA: [string, React.ReactNode, boolean?][] = [
  ["Select", <path d="M12 4v24l6-6 4 9 5-2-4-9h7z" fill={L} />],
  ["Lasso", <><ellipse cx="15" cy="14" rx="12" ry="7" transform="rotate(-42 15 14)" fill="none" stroke={T} strokeWidth="2" strokeDasharray="4 2" /><path d="M18 10v19l4-4 3 7 4-2-3-6h6z" fill={L} stroke={C.bg} strokeWidth="0.800" /></>],
  ["Paint select", <><ellipse cx="15" cy="20" rx="13" ry="7" transform="rotate(42 15 20)" fill="none" stroke={T} strokeWidth="2" strokeDasharray="4 2" /><path d="M31 3l2 2-9 11-3-3z" fill={L} /><path d="M20 13l4 4q-3 6-13 4 4-1 5-5z" fill={L} /></>],
  ["Move", <><rect x="12" y="12" width="12" height="13" fill={L} stroke={K} /><path d="M18 4l4 4h-8zM18 33l4-4h-8zM4 18l4-4v9zM32 18l-4-4v9z" fill={T} stroke="#2f6a76" /></>, true],
  ["Rotate", <><path d="M17 32A14 14 0 1 1 30 19" stroke={T} strokeWidth="1.500" fill="none" /><path d="M27 17h6l-3 5z" fill={T} /><path d="M18 10l7 8-7 8-8-8z" fill={L} /></>],
  ["Scale", <><path d="M6 5h25v25H6z" fill="none" stroke={T} strokeWidth="1.300" strokeDasharray="4 2" /><path d="M15 15h6v6" stroke={T} fill="none" strokeWidth="1.300" /><rect x="5" y="18" width="12" height="13" fill={L} stroke={K} /></>],
];
const toolB: [string, React.ReactNode][] = [
  ["Single pane", <><rect x="4" y="4" width="28" height="28" fill={L} /><rect x="6.500" y="6.500" width="23" height="23" fill="none" stroke={K} strokeWidth="1.300" /><Diamond x={18} y={14} c={K} w={4} h={3} /><Diamond x={13} y={18} c={K} w={4} h={3} /><Diamond x={23} y={18} c={K} w={4} h={3} /><Diamond x={18} y={22} c={K} w={4} h={3} /></>],
  ["Four panes", <><path d="M4.500 4.500h12v12h-12zM4.500 19.500h12v12h-12zM19.500 19.500h12v12h-12z" fill={K} stroke={L} strokeWidth="1.300" /><path d="M19 4h13v13H19z" fill={L} /><Diamond x={25} y={10} c={K} w={4} h={3} /><path d="M10.500 7v7M7 10.500h7M10.500 22v7M7 25.500h7M25.500 22v7M22 25.500h7" stroke={L} strokeWidth="1.300" /></>],
  ["Two panes", <><path d="M4.500 4.500h12v27h-12z" fill={K} stroke={L} strokeWidth="1.300" /><path d="M19 4h13v28H19z" fill={L} /><Diamond x={25} y={18} c={K} w={4} h={3} /><path d="M10.500 14v8M6 18h9" stroke={L} strokeWidth="1.300" /></>],
  ["Outliner", <><path d="M4.500 4.500h27v27h-27z" fill={K} stroke={L} strokeWidth="1.300" /><path d="M8 8h4v4H8zM15 13h3v3h-3zM15 19h3v3h-3zM15 25h3v3h-3z" fill={L} /><path d="M12 10h11M18 14.500h9M18 20.500h5M18 26.500h8M10.500 12v17M11 14.500h4M11 20.500h4M11 26.500h4" stroke="#999" /></>],
];

const MayaM = () => (
  <>
    <path d="M1 1h9v29H1z" fill="#0f9a9c" />
    <path d="M1 30l9-9v9z" fill="#37b9bb" />
    <path d="M24 1h8v29h-8z" fill="#12a5a6" />
    <path d="M24 30l8-14v14z" fill="#43c4c3" />
    <path d="M23 1h9L20 25h-6z" fill="#17898f" />
    <path d="M1 1h10l9 24h-5z" fill="#8fc5cb" />
  </>
);

/* ---------- scene ---------- */
const CX = 699.9;
const CY = 405.5;
const STEP = 36.35;
const gridIdx = Array.from({ length: 25 }, (_, i) => i - 12);
const labels: [string, number, number][] = [
  ["-10", 1127, 39],
  ["-5", 1131, 221],
  ["0", 1133, 402],
  ["5", 1133, 584],
  ["10", 1129, 766],
];
const half =
  "M404 333.500h115.500M404 477.500h115.500M400 405.500 404 333.500 419 324.500h109.500l15 29.500h39l61-10.500h56M400 405.500 404 477.500 419 486.500h109.500l15-29h39l61 10h56M528.500 324.500 519.500 333.500 537.500 356.500h41.500l64-8.500h57M528.500 486.500 519.500 477.500 537.500 454.500h41.500l64 8h57M519.500 333.500 517.500 405.500 519.500 477.500M537.500 356.500 536.500 405.500 537.500 454.500M578.500 356.500V454.500M642.500 348V462.500M543.500 354l-6 2.500M543.500 457.500l-6-3M644.500 343.500l-2 5M644.500 467.500l-2-5M585 354l-6 2.500M585 457.500l-6-3";
const body =
  "M400 405.500 404 333.500 419 324.500H528.500L543.500 354H583L644 343.500H700V467.500H644L583 457.500H543.500L528.500 486.500H419L404 477.500z";

const SceneView = () => (
  <Scene viewBox="0 0 1400 811" preserveAspectRatio="xMidYMid slice" shapeRendering="crispEdges">
    <g fill="#434343">
      {gridIdx.map((i) => (
        <rect key={i} x={Math.round(CX + i * STEP - 0.5)} y={-200} width={i ? 1 : 2} height={1400} />
      ))}
      {gridIdx.map((i) => (
        <rect key={i} x={263} y={Math.round(CY + i * STEP - 0.5)} width={874} height={i ? 1 : 2} />
      ))}
    </g>
    <g fill="#3d3d3d" fontSize="12">
      {labels.map(([t, x, y]) => (
        <text key={t} x={x} y={y}>{t}</text>
      ))}
    </g>
    {["", "translate(1400 0) scale(-1 1)"].map((t) => (
      <path key={t} transform={t} d={body} fill="#888888" />
    ))}
    <g fill="none" stroke="#04045e">
      {["", "translate(1400 0) scale(-1 1)"].map((t) => (
        <path key={t} transform={t} d={half} />
      ))}
      <path d="M400 405.500h600M699.500 343v125" />
    </g>
  </Scene>
);

const menus = ["File", "Edit", "Create", "Select", "Modify", "Display", "Windows", "Mesh", "Edit Mesh", "Mesh Tools", "Mesh Display", "Curves", "Surfaces", "Deform", "UV", "Generate", "Cache", "Arnold", "Help"];
const shelfTabs = ["Curves / Surfaces", "Poly Modeling", "Sculpting", "Rigging", "Animation", "Rendering", "FX", "FX Caching", "Custom", "Arnold", "Bifrost", "MASH", "Motion Graphics", "XGen"];

const Tools = ({ items }: { items: [string, React.ReactNode, boolean?][] }) => (
  <>
    {items.map(([name, art, on]) => (
      <Tool key={name} aria-label={name} $on={on}>
        <Svg viewBox="0 0 20 20">{art}</Svg>
      </Tool>
    ))}
  </>
);
const Cells = ({ items }: { items: [string, React.ReactNode, boolean?][] }) => (
  <>
    {items.map(([name, art, on]) => (
      <ToolCell key={name} aria-label={name} $on={on} $first={name === "Select"}>
        <Svg $w={36} viewBox="0 0 36 36">{art}</Svg>
      </ToolCell>
    ))}
  </>
);

const tasks: [string, React.ReactNode, ("open" | "active")?][] = [
  ["Cortana", <circle cx="12" cy="12" r="7" fill="none" stroke="#fff" strokeWidth="2" />],
  ["Task view", <path d="M4 4v3h11V4M4 20v-3h11v3M4 9h11v6H4zM18.500 4v4M18.500 15v5M17.500 10h2v3h-2z" stroke="#fff" fill="none" strokeWidth="1.300" />],
  ["Edge", <><circle cx="12" cy="12" r="12" fill="#1173cf" /><path d="M1 9Q4 0 13 0q11 1 11 10 0 6-6 6-3 0-3-2 2-5-3-7Q4 5 1 11z" fill="#36c5d8" /><path d="M16 1q8 3 8 9 0 6-6 6-3 0-3-2 4-5 1-13z" fill="#63d860" /><path d="M9 10q-4 9 5 12 5 1 8-3-10 3-11-5 0-3 3-5-3-1-5 1z" fill="#0c4a8c" /></>],
  ["File Explorer", <><path d="M1 3h9l2 3h11v16H1z" fill="#e8a51c" /><path d="M1 7h22v14H1z" fill="#ffd667" /><path d="M5 22v-7q0-2 2-2h10q2 0 2 2v7h-3v-4H8v4z" fill="#3c94e0" /></>, "open"],
  ["Store", <><path d="M8 7V4q0-3 4-3t4 3v3" stroke="#fff" fill="none" strokeWidth="1.500" /><path d="M0 6h24v15q0 3-3 3H3q-3 0-3-3z" fill="#fff" /><path d="M6 9h5v5H6z" fill="#f25022" /><path d="M13 9h5v5h-5z" fill="#7fba00" /><path d="M6 16h5v5H6z" fill="#00a4ef" /><path d="M13 16h5v5h-5z" fill="#ffb900" /></>],
  ["Mail", <><path d="M0 8l12-6 12 6v14H0z" fill="#fff" /><path d="M2 8h20l-9 5 6 5z" fill="#1b281b" /></>],
  ["Wacom Center", <><circle cx="12" cy="12" r="12" fill="#fff" /><path d="M6 7v7q0 3 3 3t3-3V7v7q0 3 3 3t3-3V7" stroke="#2196d8" fill="none" strokeWidth="1.500" /></>, "open"],
  ["Hammer tool", <><rect width="24" height="24" fill="#13304f" /><path d="M0 0h16L0 16z" fill="#0f5d93" /><path d="M2 19l8-9 3 3-8 9q-4 0-3-3zM10 10 8 6l4-4 7 6-3 6-3-1z" stroke="#fff" fill="none" strokeWidth="1.500" /><path d="M5 18l1 1M8 15l1 1M15 3l5 5M19 2l3 4" stroke="#fff" strokeWidth="1.300" /></>, "open"],
  ["Maya", <><rect width="24" height="24" fill="#e4f0f0" /><g transform="translate(3 3) scale(.55)"><MayaM /></g><path d="M11 21h10" stroke="#37a4a6" strokeWidth="3" strokeDasharray="2 .5" /></>, "active"],
  ["Chrome", <><circle cx="12" cy="12" r="11" fill="#fbc116" /><path d="M12 12 2.500 6.500A11 11 0 0 1 21.500 6.500H12z" fill="#e33b2e" /><path d="M12 12 2.500 6.500A11 11 0 0 0 11 23l5-9z" fill="#2ba24c" /><circle cx="12" cy="12" r="5.500" fill="#fff" /><circle cx="12" cy="12" r="4.300" fill="#3a7de8" /></>, "open"],
];

export default function App() {
  return (
    <Shell>
      <Global />
      <TitleBar>
        <Svg $w={16} viewBox="0 0 16 16">
          <rect width="16" height="16" y="1" fill="#d7ecec" />
          <g transform="translate(2 1) scale(.36 .4)"><MayaM /></g>
          <path d="M6 15.500h8" stroke="#37a4a6" strokeDasharray="2 .5" />
        </Svg>
        <TitleText>untitled* - Autodesk MAYA 2022.3 - Educational Version: untitled</TitleText>
        <Spacer />
        <WinButton aria-label="Minimize"><Svg $w={10} viewBox="0 0 10 10"><path d="M0 5.500h10" stroke="currentColor" /></Svg></WinButton>
        <WinButton aria-label="Restore"><Svg $w={10} viewBox="0 0 10 10"><path d="M.5 2.500h7v7h-7zM2.500 2V.5h7v7H8" stroke="currentColor" fill="none" /></Svg></WinButton>
        <WinButton aria-label="Close"><Svg $w={10} viewBox="0 0 10 10"><path d="M0 0l10 10M10 0 0 10" stroke="currentColor" /></Svg></WinButton>
      </TitleBar>

      <MenuBar>
        <HomeButton aria-label="Home"><Svg $w={16} viewBox="0 0 16 16"><path d="M8 1l8 8h-2v6H9.500v-5h-3v5H2V9H0zM12 2h2v4l-2-2z" fill={L} /></Svg></HomeButton>
        {menus.map((m, i) => <MenuItem key={m} $on={i === 0}>{m}</MenuItem>)}
        <Spacer />
        <WorkspaceLabel htmlFor="workspace">
          Workspace:
          <Pick id="workspace" value="Modeling - Standard*" w={192} h={19} />
        </WorkspaceLabel>
        <Tool $w={28} aria-label="Lock workspace"><Svg $w={12} $h={18} viewBox="0 0 12 18"><path d="M3 8V5q0-4 3-4t3 4v3" stroke={L} strokeWidth="2" fill="none" /><path d="M0 8h12v10H0z" fill={L} /><path d="M5 11h2v4H5z" fill={K} /></Svg></Tool>
      </MenuBar>

      <StatusLine>
        <Grip />
        <Pick id="menuset" label="Menu set" value="Modeling" w={98} h={20} />
        <Bar />
        <Tools items={fileTools} />
        <Fold w={23} />
        <Bar />
        <Tools items={selectTools} />
        <Fold w={23} />
        <Bar />
        <Tools items={snapTools} />
        <Down w={19} />
        <Field $w={98} aria-label="Live surface" defaultValue="No Live Surface" />
        <Bar w={26} />
        <Down w={18} />
        <Field $w={98} $tone={C.accent} aria-label="Symmetry" defaultValue="Object X" />
        <Fold w={24} />
        <Bar />
        <Tools items={renderTools} />
        <Fold w={23} />
        <Bar />
        <SignIn>
          <SignInFace><Svg $w={15} $h={19} viewBox="0 0 15 19"><path d="M7.500 0q4 0 4 5 0 4-2 6l1 3q4 1 4 4H0q0-3 4-4l1-3Q3 9 3 5q0-5 4.500-5z" fill="#eee" stroke="#111" /></Svg></SignInFace>
          <Pick id="account" label="Account" value="Sign In" w={120} h={22} cut={false} pad={21} arrow="#ececec" />
        </SignIn>
        <Spacer />
        <Tools items={sideTools} />
      </StatusLine>
      <Rule />

      <Shelf>
        <Grip />
        <ShelfSide>
          <Svg $w={10} $h={5} viewBox="0 0 10 5"><path d="M0 0h10v2H0zM0 3h10v2H0z" fill="#9a9a9a" /></Svg>
          <Svg $w={10} viewBox="0 0 10 10"><circle cx="5" cy="5" r="3.500" fill="none" stroke={L} strokeWidth="1.500" /><circle cx="5" cy="5" r="4.600" fill="none" stroke={L} strokeWidth="1.200" strokeDasharray="1.600 2" /></Svg>
        </ShelfSide>
        <ShelfMain>
          <TabRow $inset={4}>
            {shelfTabs.map((t) => <Tab key={t} $on={t === "Poly Modeling"}>{t}</Tab>)}
          </TabRow>
          <ShelfRow>
            {shelf.map((s, i) =>
              s ? (
                <ShelfButton key={i} aria-label={s[0]}>
                  <Svg $w={26} viewBox="0 0 26 26">{s[1]}</Svg>
                </ShelfButton>
              ) : (
                <ShelfSep key={i} />
              )
            )}
            <Spacer />
            <Scroller>
              <Svg $w={8} $h={5} viewBox="0 0 8 5"><path d="M4 0l4 5H0z" fill={L} /></Svg>
              <Svg $w={10} viewBox="0 0 10 10"><circle cx="5" cy="5" r="5" fill="#666" /></Svg>
              <Svg $w={8} $h={5} viewBox="0 0 8 5"><path d="M4 5l4-5H0z" fill={L} /></Svg>
            </Scroller>
          </ShelfRow>
        </ShelfMain>
      </Shelf>
      <Rule />

      <Work>
        <ToolBox>
          <Grip $wide />
          <Cells items={toolA} />
          <ToolGap />
          <Cells
            items={[
              ["Custom axis", <><rect x="15" y="15" width="6" height="7" fill="none" stroke={T} strokeWidth="1.500" /><path d="M18 4l3 7h-6zM3 30l5-5 3 4zM33 30l-5-5-3 4z" fill={T} /><path d="M18 11v4M14 22l-5 4M22 22l5 4" stroke={L} strokeDasharray="2 1" /><path d="M23 5h11M23 9h11" stroke={L} strokeWidth="1.300" /><circle cx="30" cy="5" r="1.800" fill={L} /><circle cx="27" cy="9" r="1.800" fill={L} /></>],
            ]}
          />
          <ToolSep />
          <Cells items={toolB} />
          <ToolSep />
          <Cells
            items={[
              ["Search", <><path d="M6 .5H.5v35H6M30 .5h5.500v35H30" stroke={C.lime} fill="none" /><circle cx="16" cy="15" r="8" fill="none" stroke={L} strokeWidth="2.500" /><path d="M22 21l6 6" stroke={L} strokeWidth="3.500" strokeLinecap="round" /></>],
            ]}
          />
          <Spacer />
          <Svg $w={33} $h={31} viewBox="0 0 33 31"><MayaM /></Svg>
        </ToolBox>
        <VRule />
        <Viewport>
          <PanelMenu>
            {["View", "Shading", "Lighting", "Show", "Renderer", "Panels"].map((m) => <PlainMenu key={m}>{m}</PlainMenu>)}
          </PanelMenu>
          <PanelTools>
            {mini.map((m, i) =>
              m === "|" ? (
                <MiniSep key={i} />
              ) : (
                <MiniTool key={i} aria-label={m[0]} $on={m[2] === "on"} $box={m[2] === "box"}>
                  <Svg $w={16} viewBox="0 0 16 16">{m[1]}</Svg>
                </MiniTool>
              )
            )}
            <MiniTool aria-label="Exposure"><Svg $w={14} viewBox="0 0 14 14"><circle cx="7" cy="7" r="5" fill="none" stroke={L} strokeWidth="4" strokeDasharray="4.500 .8" /></Svg></MiniTool>
            <NumField aria-label="Exposure value" defaultValue="0.00" />
            <MiniTool aria-label="Gamma"><Svg $w={14} viewBox="0 0 14 14"><path d="M6 3a4 4 0 0 0 0 8z" fill={L} /><path d="M6 1h6v12H6v-2a4 4 0 0 0 0-8z" fill={L} /><path d="M6 3a4 4 0 0 1 0 8z" fill={K} /></Svg></MiniTool>
            <NumField aria-label="Gamma value" defaultValue="1.00" />
            <MiniTool $on aria-label="Color management"><Svg $w={16} viewBox="0 0 16 16"><circle cx="8" cy="8" r="7" fill={T} stroke="#23545c" strokeWidth="1.300" /><text x="8" y="10" textAnchor="middle" fill="#1f474e" fontWeight="bold" fontSize="6">ON</text></Svg></MiniTool>
            <SepCell $w={3} />
            <Pick id="viewtransform" label="View transform" value="ACES 1.0 SDR-video (sRGB)" w={198} h={17} pad={3} />
          </PanelTools>
          <Canvas>
            <SceneView />
            <Caption>Symmetry: Object X</Caption>
            <Caption $bottom>persp -Y</Caption>
            <ViewCube>TOP</ViewCube>
            <Gizmo viewBox="0 0 24 30">
              <path d="M5 10.500h15" stroke="#0000e8" />
              <path d="M19.500 11v14" stroke="#e80000" />
              <text x="1" y="10" fill="#0000f0">z</text>
              <text x="17" y="9" fill="#00e000">y</text>
              <text x="17" y="25" fill="#f00000">x</text>
            </Gizmo>
          </Canvas>
        </Viewport>
        <VRule />
        <Attributes>
          <TabRow>
            <Tab>Modeling Toolkit</Tab>
            <Tab $on>Attribute Editor</Tab>
          </TabRow>
          <PanelMenu $roomy>
            {["List", "Selected", "Focus", "Attributes", "Display", "Show", "Help"].map((m) => <PlainMenu key={m}>{m}</PlainMenu>)}
          </PanelMenu>
          <Message>Select an object in the scene to view and edit its attributes</Message>
          <ButtonRow>
            <WideButton disabled>Select</WideButton>
            <WideButton>Load Attributes</WideButton>
            <WideButton disabled>Copy Tab</WideButton>
          </ButtonRow>
        </Attributes>
      </Work>
      <Rule />

      <CommandRow>
        <HelpLine>
          <Grip />
          <Svg $w={16} viewBox="0 0 16 16"><circle cx="8" cy="8" r="8" fill="#8f8f8f" /><path d="M5.500 6q0-2.500 2.500-2.500t2.500 2.300Q10.500 7.500 8 8.500V10M8 11.500v2" stroke={C.bg} strokeWidth="2" fill="none" /></Svg>
        </HelpLine>
        <VRule />
        <CommandLine>
          <Grip />
          <MelLabel htmlFor="mel">MEL</MelLabel>
          <Entry id="mel" $grow={349} />
          <EntryGrip />
          <Entry $grow={508} aria-label="Command output" readOnly />
          <ScriptButton aria-label="Script editor"><Svg $w={19} $h={20} viewBox="0 0 19 20"><path d="M0 0h19v3H0zM0 5h19v15H0z" fill={L} /><path d="M2 1h1v1H2zM4 1h1v1H4zM6 1h1v1H6z" fill={K} /><text x="9.500" y="16" textAnchor="middle" fill={K} fontWeight="bold" fontSize="10">{"{;}"}</text></Svg></ScriptButton>
        </CommandLine>
      </CommandRow>

      <Taskbar>
        <StartButton aria-label="Start"><Svg $w={16} viewBox="0 0 16 16"><path d="M0 2l7-1v6.500H0zM8 1l8-1v7.500H8zM0 8.500h7V15l-7-1zM8 8.500h8V16l-8-1z" fill="#fff" /></Svg></StartButton>
        <SearchBox htmlFor="search">
          <Svg $w={16} viewBox="0 0 16 16"><circle cx="10" cy="6" r="5.500" fill="none" stroke="#222" strokeWidth="1.300" /><path d="M6 10l-6 6" stroke="#222" strokeWidth="1.300" /></Svg>
          <SearchInput id="search" placeholder="Type here to search" />
        </SearchBox>
        {tasks.map(([name, art, st]) => (
          <TaskButton key={name} aria-label={name} $open={st === "open"} $active={st === "active"}>
            <Svg $w={24} viewBox="0 0 24 24">{art}</Svg>
          </TaskButton>
        ))}
        <Spacer />
        <TrayButton $w={48} aria-label="News"><Svg $w={24} $h={16} viewBox="0 0 24 16"><path d="M1 1h19v14H1zM20 4h3v9q0 2-2 2H3" stroke="#fff" fill="none" strokeWidth="1.500" /><path d="M4 4h13M12 7.500h5M12 10h5M12 12.500h5" stroke="#fff" strokeWidth="1.300" /><path d="M4.500 7.500h5v5h-5z" stroke="#fff" fill="none" strokeWidth="1.300" /></Svg></TrayButton>
        <TrayButton $w={24} aria-label="Hidden icons"><Svg $w={12} $h={8} viewBox="0 0 12 8"><path d="M0 7l6-6 6 6" stroke="#fff" fill="none" strokeWidth="1.300" /></Svg></TrayButton>
        <TrayButton $w={24} aria-label="Network"><Svg $w={16} viewBox="0 0 16 16"><path d="M5 3.500h10.500v8H3.500V7M8.500 12v3M5 15.500h8M.5 2h4v4h-4z" stroke="#fff" fill="none" strokeWidth="1.200" /></Svg></TrayButton>
        <TrayButton $w={24} aria-label="Volume"><Svg $w={16} viewBox="0 0 16 16"><path d="M.5 5.500H3l4-4v13l-4-4H.5z" stroke="#fff" fill="none" strokeWidth="1.200" /><path d="M9 5.500q2 2.500 0 5" stroke="#fff" fill="none" /><path d="M11 3.500q3.500 4.500 0 9M13 1.500q5 6.500 0 13" stroke="#999" fill="none" /></Svg></TrayButton>
        <TrayButton $w={33} aria-label="Pen menu"><Svg $w={16} viewBox="0 0 16 16"><path d="M12 0l2 2-6 12-3 1 1-4zM5 9q-5 0-5 4t4 2M9 13q2 2 3-2t4-1V6" stroke="#fff" fill="none" strokeWidth="1.200" /></Svg></TrayButton>
        <Clock><span>12:25 PM</span><span>9/22/2022</span></Clock>
        <TrayButton $w={41} aria-label="Notifications">
          <Svg $w={24} viewBox="0 0 24 24"><path d="M2 3h15v13H8v4l-4-4H2z" fill="#fff" /><path d="M5 7h9M5 10h9M5 13h6" stroke="#222" /><circle cx="17" cy="18" r="7.500" fill="#2c2c2c" stroke="#888" /><text x="17" y="22" textAnchor="middle" fill="#fff" fontWeight="bold" fontSize="11">2</text></Svg>
        </TrayButton>
        <Desk />
      </Taskbar>
    </Shell>
  );
}
